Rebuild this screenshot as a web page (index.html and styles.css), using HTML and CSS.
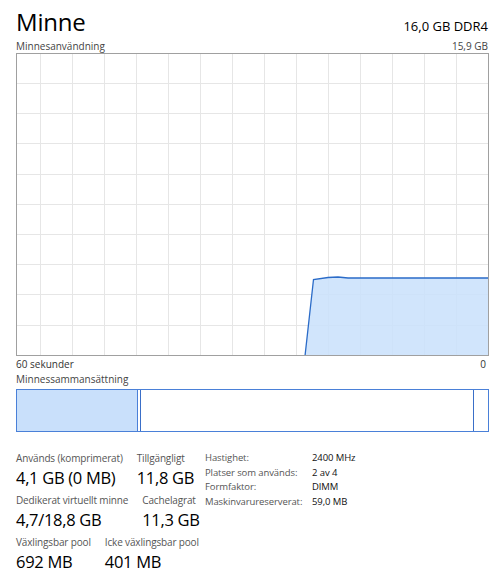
FILE: index.html
```html
<!DOCTYPE html>
<html lang="sv">
<head>
    <meta charset="UTF-8">
    <title>Minne</title>
    <link rel="stylesheet" href="styles.css">
</head>
<body>
    <div class="page">
        <header class="head">
            <h1>Minne</h1>
            <span class="total">16,0 GB DDR4</span>
        </header>

        <div class="caption">
            <span>Minnesanvändning</span>
            <span>15,9 GB</span>
        </div>

        <!-- diagram over senaste 60 sekunder -->
        <svg class="graph" width="473" height="303" viewBox="0 0 473 303">
            <g stroke="#e6e6e6" stroke-width="1">
                <line x1="24.5" y1="0" x2="24.5" y2="303"/>
                <line x1="56.5" y1="0" x2="56.5" y2="303"/>
                <line x1="88.5" y1="0" x2="88.5" y2="303"/>
                <line x1="120.5" y1="0" x2="120.5" y2="303"/>
                <line x1="152.5" y1="0" x2="152.5" y2="303"/>
                <line x1="184.5" y1="0" x2="184.5" y2="303"/>
                <line x1="216.5" y1="0" x2="216.5" y2="303"/>
                <line x1="248.5" y1="0" x2="248.5" y2="303"/>
                <line x1="280.5" y1="0" x2="280.5" y2="303"/>
                <line x1="312.5" y1="0" x2="312.5" y2="303"/>
                <line x1="344.5" y1="0" x2="344.5" y2="303"/>
                <line x1="376.5" y1="0" x2="376.5" y2="303"/>
                <line x1="408.5" y1="0" x2="408.5" y2="303"/>
                <line x1="440.5" y1="0" x2="440.5" y2="303"/>
                <line x1="0" y1="30.5" x2="473" y2="30.5"/>
                <line x1="0" y1="60.5" x2="473" y2="60.5"/>
                <line x1="0" y1="90.5" x2="473" y2="90.5"/>
                <line x1="0" y1="121.5" x2="473" y2="121.5"/>
                <line x1="0" y1="151.5" x2="473" y2="151.5"/>
                <line x1="0" y1="181.5" x2="473" y2="181.5"/>
                <line x1="0" y1="211.5" x2="473" y2="211.5"/>
                <line x1="0" y1="241.5" x2="473" y2="241.5"/>
                <line x1="0" y1="272.5" x2="473" y2="272.5"/>
            </g>
            <path d="M289 303 L297.5 226.5 L312 224.5 L322 224 L332 225 L473 225 L473 303 Z" fill="#c9e0fb" fill-opacity="0.85"/>
            <path d="M289 303 L297.5 226.5 L312 224.5 L322 224 L332 225 L473 225" fill="none" stroke="#2a6bc8" stroke-width="1.3"/>
            <rect x="0.5" y="0.5" width="472" height="302" fill="none" stroke="#a0a0a0" stroke-width="1"/>
        </svg>

        <div class="axis">
            <span>60 sekunder</span>
            <span>0</span>
        </div>

        <div class="caption comp-title">Minnessammansättning</div>
        <div class="comp">
            <div class="comp-used"></div>
            <div class="comp-mod"></div>
            <div class="comp-standby"></div>
            <div class="comp-free"></div>
        </div>

        <section class="stats">
            <div class="stats-left">
                <div class="stat-row">
                    <div class="stat">
                        <span class="label">Används (komprimerat)</span>
                        <span class="value">4,1 GB (0 MB)</span>
                    </div>
                    <div class="stat">
                        <span class="label">Tillgängligt</span>
                        <span class="value">11,8 GB</span>
                    </div>
                </div>
                <div class="stat-row">
                    <div class="stat">
                        <span class="label">Dedikerat virtuellt minne</span>
                        <span class="value">4,7/18,8 GB</span>
                    </div>
                    <div class="stat">
                        <span class="label">Cachelagrat</span>
                        <span class="value">11,3 GB</span>
                    </div>
                </div>
                <div class="stat-row">
                    <div class="stat">
                        <span class="label">Växlingsbar pool</span>
                        <span class="value">692 MB</span>
                    </div>
                    <div class="stat">
                        <span class="label">Icke växlingsbar pool</span>
                        <span class="value">401 MB</span>
                    </div>
                </div>
            </div>
            <dl class="specs">
                <dt>Hastighet:</dt><dd>2400 MHz</dd>
                <dt>Platser som används:</dt><dd>2 av 4</dd>
                <dt>Formfaktor:</dt><dd>DIMM</dd>
                <dt>Maskinvarureserverat:</dt><dd>59,0 MB</dd>
            </dl>
        </section>
    </div>
</body>
</html>
```

FILE: styles.css
```css
body { margin: 0; background: #fff; color: #000; font-family: "Open Sans", "Noto Sans", sans-serif; }
.page { padding: 4px 12px 0 16px; width: 473px; }
.head { display: flex; justify-content: space-between; align-items: baseline; height: 36px; }
h1 { margin: 0; font-size: 24px; font-weight: 400; line-height: 36px; letter-spacing: -0.2px; }
.total { font-size: 13px; padding-right: 1px; }
.caption { display: flex; justify-content: space-between; font-size: 10px; color: #444; line-height: 13px; padding-right: 1px; }
.graph { display: block; }
.axis { display: flex; justify-content: space-between; font-size: 10px; color: #333; line-height: 14px; margin-top: 1px; padding-right: 3px; }
.comp-title { margin-top: 2px; }
.comp { display: flex; height: 43px; margin-top: 3px; border: 1.5px solid #4a80d8; box-sizing: border-box; }
.comp-used { width: 120px; background: #c9e0fb; border-right: 1.5px solid #4a80d8; }
.comp-mod { width: 2px; border-right: 1.5px solid #3a6fc8; }
.comp-standby { flex: 1; border-right: 1.5px solid #3a6fc8; }
.comp-free { width: 14px; }
.stats { display: flex; align-items: flex-start; margin-top: 19px; white-space: nowrap; }
.stats-left { width: 189px; flex: none; display: flex; flex-direction: column; gap: 4px; }
.stat-row { display: flex; gap: 14px; }
.stat { display: flex; flex-direction: column; }
.label { font-size: 10px; color: #555; line-height: 15px; letter-spacing: -0.15px; }
.value { font-size: 16.5px; line-height: 23px; letter-spacing: -0.3px; }
.specs { display: grid; grid-template-columns: 107px auto; margin: 0; font-size: 9.5px; line-height: 14.5px; letter-spacing: -0.1px; }
.specs dt { color: #555; }
.specs dd { margin: 0; color: #111; }
```
